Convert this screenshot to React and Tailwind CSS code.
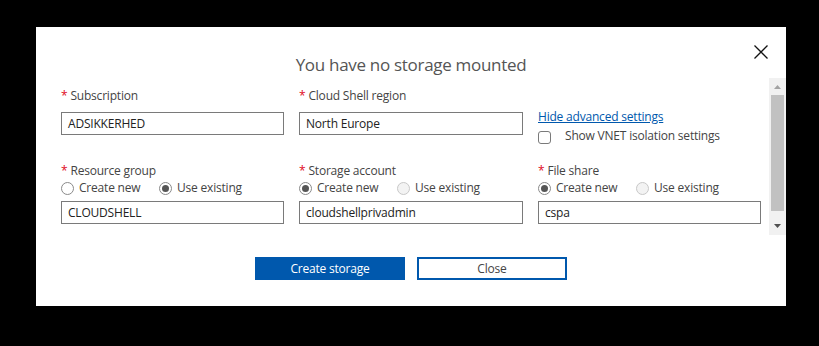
import React from 'react';

const Label = ({ children }) => (
  <div className="h-4 leading-4 text-[12px] text-[#444]">
    <span className="text-[#e00b1c] mr-[3px]">*</span>
    {children}
  </div>
);

const TextBox = ({ value }) => (
  <div className="h-[23px] border border-[#7a7a7a] bg-white px-[6px] text-[12px] leading-[21px] text-[#222]">
    {value}
  </div>
);

const Radio = ({ checked, disabled, label, wide }) => (
  <div className={`flex items-center ${wide ? 'w-[98px]' : ''}`}>
    <span
      className={`w-[13px] h-[13px] rounded-full border flex items-center justify-center mr-[5px] ${
        disabled ? 'border-[#c8c8c8] bg-[#f3f3f3]' : 'border-[#8a8a8a] bg-white'
      }`}
    >
      {checked && <span className="w-[7px] h-[7px] rounded-full bg-[#555]" />}
    </span>
    <span className="text-[12px] leading-4 text-[#444]">{label}</span>
  </div>
);

const RadioGroup = ({ existing }) => (
  <div className="flex h-4 mt-px">
    <Radio wide checked={!existing} label="Create new" />
    <Radio checked={existing} disabled={!existing} label="Use existing" />
  </div>
);

const Scrollbar = () => (
  <div className="w-[17px] h-[157px] bg-[#f1f1f1] flex flex-col">
    <div className="h-[17px] flex items-center justify-center">
      <svg width="7" height="4" viewBox="0 0 7 4">
        <path d="M0 4 L3.5 0 L7 4 Z" fill="#a3a3a3" />
      </svg>
    </div>
    <div className="h-[116px] mx-[2px] bg-[#c1c1c1]" />
    <div className="flex-1 flex items-center justify-center pt-[6px]">
      <svg width="7" height="4" viewBox="0 0 7 4">
        <path d="M0 0 L7 0 L3.5 4 Z" fill="#505050" />
      </svg>
    </div>
  </div>
);

export default function App() {
  return (
    <div className="w-[819px] h-[346px] bg-black pl-[36px] pt-[27px] font-['Segoe_UI','Open_Sans',sans-serif] tracking-[-0.2px]">
      <div className="w-[750px] h-[279px] bg-white flex flex-col">
        {/* header */}
        <div className="h-[51px] flex items-start">
          <div className="w-[32px]" />
          <div className="flex-1 pt-[26px] text-center text-[17px] leading-6 tracking-[-0.3px] text-[#555]">
            You have no storage mounted
          </div>
          <button className="mt-[18px] mr-[18px] w-[14px] h-[14px] flex items-center justify-center">
            <svg width="14" height="14" viewBox="0 0 14 14">
              <path d="M0.5 0.5 L13.5 13.5 M13.5 0.5 L0.5 13.5" stroke="#111" strokeWidth="1.3" />
            </svg>
          </button>
        </div>

        {/* scrolling form */}
        <div className="flex h-[157px]">
          <div className="w-[700px] ml-[25px] grid grid-cols-[223px_224px_223px] gap-x-[15px] content-start">
            <div className="pt-[10px]">
              <Label>Subscription</Label>
              <div className="mt-[8px]">
                <TextBox value="ADSIKKERHED" />
              </div>
            </div>
            <div className="pt-[10px]">
              <Label>Cloud Shell region</Label>
              <div className="mt-[8px]">
                <TextBox value="North Europe" />
              </div>
            </div>
            <div className="pt-[31px]">
              <a className="block h-4 leading-4 text-[12px] text-[#0058ad] underline">Hide advanced settings</a>
              <div className="flex items-center mt-[3px]">
                <span className="w-[13px] h-[13px] rounded-[3px] border border-[#7a7a7a] bg-white mt-[3px]" />
                <span className="ml-[14px] text-[12px] leading-4 text-[#444]">Show VNET isolation settings</span>
              </div>
            </div>

            <div className="pt-[19px]">
              <Label>Resource group</Label>
              <RadioGroup existing />
              <div className="mt-[5px]">
                <TextBox value="CLOUDSHELL" />
              </div>
            </div>
            <div className="pt-[19px]">
              <Label>Storage account</Label>
              <RadioGroup />
              <div className="mt-[5px]">
                <TextBox value="cloudshellprivadmin" />
              </div>
            </div>
            <div className="pt-[19px]">
              <Label>File share</Label>
              <RadioGroup />
              <div className="mt-[5px]">
                <TextBox value="cspa" />
              </div>
            </div>
          </div>
          <div className="ml-auto">
            <Scrollbar />
          </div>
        </div>

        {/* actions */}
        <div className="flex justify-center gap-x-[12px] mt-[22px]">
          <button className="w-[150px] h-[23px] bg-[#0058ad] text-white text-[12px] leading-[23px]">
            Create storage
          </button>
          <button className="w-[150px] h-[23px] border-2 border-[#0058ad] bg-white text-[#444] text-[12px] leading-[19px]">
            Close
          </button>
        </div>
      </div>
    </div>
  );
}
